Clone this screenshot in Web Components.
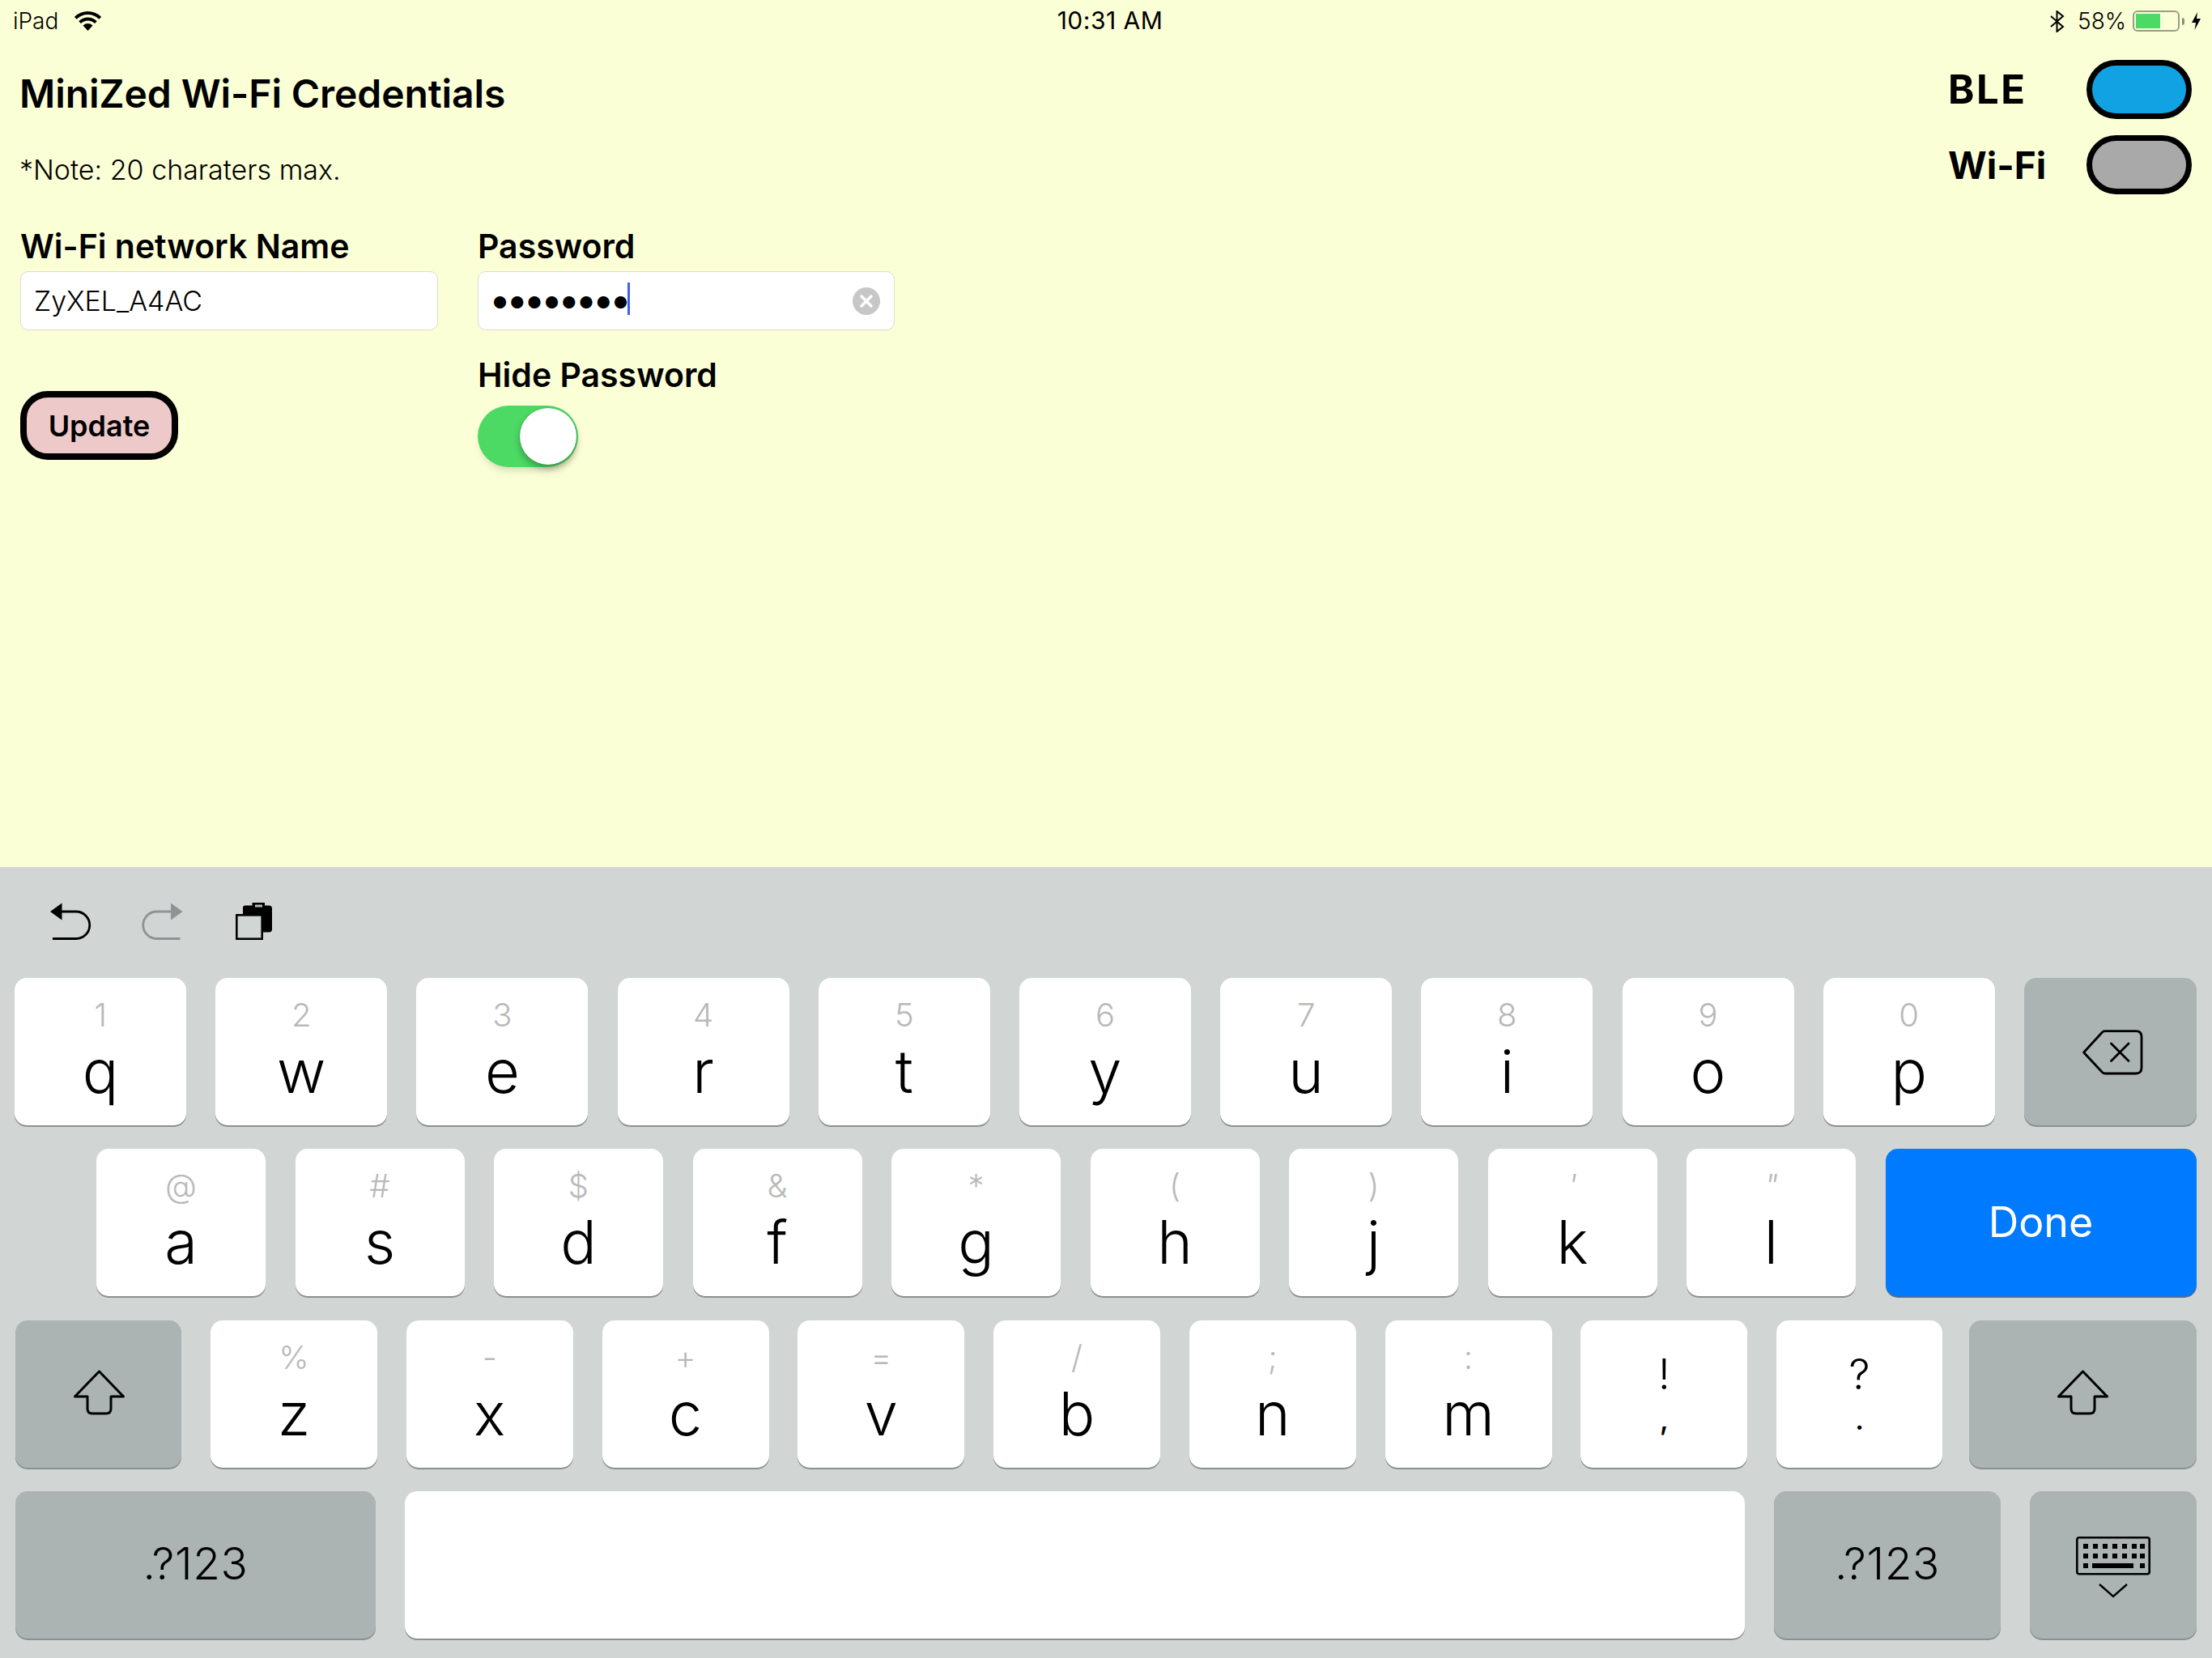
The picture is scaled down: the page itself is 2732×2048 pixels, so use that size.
<!DOCTYPE html>
<html lang="en">
<head>
<meta charset="utf-8">
<title>MiniZed Wi-Fi Credentials</title>
<style>
   html, body { margin: 0; height: 100%; }
   body { font-family: Inter, "Liberation Sans", sans-serif; color: #000; overflow: hidden; }
</style>
</head>
<body>

<ipad-app>
   <ipad-status slot="status"></ipad-status>

   <wifi-form slot="form">
      <form-title>MiniZed Wi-Fi Credentials</form-title>
      <form-note>*Note: 20 charaters max.</form-note>
      <form-columns>
         <form-stack>
            <form-label>Wi-Fi network Name</form-label>
            <text-field>ZyXEL_A4AC</text-field>
            <update-button>Update</update-button>
         </form-stack>
         <form-stack style="width: 515px">
            <form-label>Password</form-label>
            <text-field secure clear>••••••••</text-field>
            <form-label below>Hide Password</form-label>
            <ios-switch></ios-switch>
         </form-stack>
      </form-columns>
   </wifi-form>

   <link-state slot="state">
      <form-label big style="font-size: 49px; letter-spacing: 2.5px">BLE</form-label>
      <state-pill c="#10a2e2"></state-pill>
      <form-label big>Wi-Fi</form-label>
      <state-pill c="#a9a9a9"></state-pill>
   </link-state>

   <soft-keyboard slot="keyboard">
      <kb-tools slot="tools"></kb-tools>

      <kb-row pad="18" gap="36.2">
         <kb-key w="212" hint="1">q</kb-key>
         <kb-key w="212" hint="2">w</kb-key>
         <kb-key w="212" hint="3">e</kb-key>
         <kb-key w="212" hint="4">r</kb-key>
         <kb-key w="212" hint="5">t</kb-key>
         <kb-key w="212" hint="6">y</kb-key>
         <kb-key w="212" hint="7">u</kb-key>
         <kb-key w="212" hint="8">i</kb-key>
         <kb-key w="212" hint="9">o</kb-key>
         <kb-key w="212" hint="0">p</kb-key>
         <kb-key w="213" kind="mod">
            <svg width="75" height="56" viewBox="0 0 75 56" fill="none" stroke="#000" stroke-width="2.8" stroke-linejoin="round" stroke-linecap="round" style="margin: 2px 0 0 6px">
               <path d="M1.6 28 L24 3.5 Q25.5 1.6 28 1.6 H66 Q73 1.6 73 8.6 V47 Q73 54 66 54 H28 Q25.5 54 24 52 Z"/>
               <path d="M35.5 17 L57 38.5 M57 17 L35.5 38.5"/>
            </svg>
         </kb-key>
      </kb-row>

      <kb-row pad="119" gap="36.5">
         <kb-key w="209" hint="@">a</kb-key>
         <kb-key w="209" hint="#">s</kb-key>
         <kb-key w="209" hint="$">d</kb-key>
         <kb-key w="209" hint="&amp;">f</kb-key>
         <kb-key w="209" hint="*">g</kb-key>
         <kb-key w="209" hint="(">h</kb-key>
         <kb-key w="209" hint=")">j</kb-key>
         <kb-key w="209" hint="'" slant>k</kb-key>
         <kb-key w="209" hint="&quot;" slant>l</kb-key>
         <kb-key w="384" kind="done">Done</kb-key>
      </kb-row>

      <kb-row pad="19" gap="35.75">
         <kb-key w="205" kind="mod" style="margin-right: .25px">
            <shift-icon style="margin: -3px 0 0 2px"></shift-icon>
         </kb-key>
         <kb-key w="206" hint="%">z</kb-key>
         <kb-key w="206" hint="-">x</kb-key>
         <kb-key w="206" hint="+">c</kb-key>
         <kb-key w="206" hint="=">v</kb-key>
         <kb-key w="206" hint="/">b</kb-key>
         <kb-key w="206" hint=";">n</kb-key>
         <kb-key w="206" hint=":">m</kb-key>
         <kb-key w="206" kind="sym" hint="!">,</kb-key>
         <kb-key w="205" kind="sym" hint="?">.</kb-key>
         <kb-key w="281" kind="mod" ml="-2.75">
            <shift-icon style="margin-top: -3px"></shift-icon>
         </kb-key>
      </kb-row>

      <kb-row pad="19" gap="36">
         <kb-key w="445" kind="mod"><span style="margin-top: -3px">.?123</span></kb-key>
         <kb-key w="1655" kind="space"></kb-key>
         <kb-key w="280" kind="mod"><span style="margin-top: -3px">.?123</span></kb-key>
         <kb-key w="206" kind="mod">
            <svg width="92" height="76" viewBox="0 0 92 76" style="margin-top: 7px">
               <rect x="1.3" y="1.3" width="89.4" height="45" rx="2.5" fill="none" stroke="#000" stroke-width="2.6"/>
               <path fill="#000" d="M9 9h6v6H9zM21 9h6v6h-6zM33 9h6v6h-6zM45 9h6v6h-6zM57 9h6v6h-6zM69 9h6v6h-6zM79 9h6v6h-6z"/>
               <path fill="#000" d="M9 21h6v6H9zM21 21h6v6h-6zM33 21h6v6h-6zM45 21h6v6h-6zM57 21h6v6h-6zM69 21h6v6h-6zM79 21h6v6h-6z"/>
               <path fill="#000" d="M9 33h6v6H9zM20 33h51v6H20zM79 33h6v6h-6z"/>
               <path d="M29 59 L46 74 L63 59" fill="none" stroke="#000" stroke-width="2.4"/>
            </svg>
         </kb-key>
      </kb-row>
   </soft-keyboard>
</ipad-app>

<script>
const
   sheet = ( name, html ) => {
      customElements.define( name, class extends HTMLElement {
         constructor() {
            super();
            this.attachShadow( { mode: "open" } ).innerHTML = html;
         }
      } );
   }
;

/* == [ page frame ] == == == == == == == == == */
sheet( "ipad-app", `
   <style>
      :host { display: flex; flex-direction: column; width: 2732px; height: 2048px; background: #fbffd6; }
      main { flex: 1; display: flex; justify-content: space-between; padding: 0 25px; }
      ::slotted( [slot=keyboard] ) { flex: none; }
   </style>
   <slot name="status"></slot>
   <main>
      <slot name="form"></slot>
      <slot name="state"></slot>
   </main>
   <slot name="keyboard"></slot>
` );

/* == [ status bar ] == == == == == == == == == */
sheet( "ipad-status", `
   <style>
      :host { display: grid; grid-template-columns: 1fr auto 1fr; align-items: center; height: 52px; padding: 0 14px 0 16px; font-size: 28px; font-weight: 300; color: #000; }
      .l, .r { display: flex; align-items: center; }
      .l { gap: 20px; }
      .r { justify-content: flex-end; }
      .time { font-weight: 400; font-size: 30px; letter-spacing: .5px; padding: 0 0 2px 8px; }
      .bat { position: relative; width: 58px; height: 26px; box-sizing: border-box; border: 2px solid #9a9c8a; border-radius: 6px; margin: 0 3px 0 8px; }
      .bat i { display: block; width: 30px; height: 18px; margin: 2px; background: #4cd964; }
      .nub { width: 3px; height: 9px; background: #8a8c7a; border-radius: 0 3px 3px 0; margin-right: 9px; }
   </style>
   <div class="l">
      <span>iPad</span>
      <svg width="33" height="24" viewBox="0 0 33 24">
         <path fill="none" stroke="#000" stroke-width="4" d="M1.3 8.3 A21.5 21.5 0 0 1 31.7 8.3 M6.6 13.6 A14 14 0 0 1 26.4 13.6"/>
         <path d="M16.5 24 L10.5 17.5 A8.5 8.5 0 0 1 22.5 17.5 Z"/>
      </svg>
   </div>
   <div class="time">10:31 AM</div>
   <div class="r">
      <svg width="19" height="27" viewBox="0 0 19 27" fill="none" stroke="#000" stroke-width="2" style="margin-right: 16px">
         <path d="M2 7 L17 20 L9.5 26 V1 L17 7 L2 20"/>
      </svg>
      <span>58%</span>
      <div class="bat"><i></i></div>
      <div class="nub"></div>
      <svg width="11" height="22" viewBox="0 0 11 22"><path d="M7 0 L0 13 H5 L3.5 22 L11 8 H6 Z"/></svg>
   </div>
` );

/* == [ form ] == == == == == == == == == */
sheet( "wifi-form", `
   <style>
      :host { display: block; }
   </style>
   <slot></slot>
` );
sheet( "form-title", `
   <style>
      :host { display: block; margin: 34px 0 0 -1px; font-size: 48px; line-height: 60px; font-weight: 600; letter-spacing: -.1px; }
   </style>
   <slot></slot>
` );
sheet( "form-note", `
   <style>
      :host { display: block; margin: 42px 0 0 -1px; font-size: 34px; line-height: 44px; font-weight: 300; }
   </style>
   <slot></slot>
` );
sheet( "form-columns", `
   <style>
      :host { display: flex; gap: 49px; margin-top: 48px; }
   </style>
   <slot></slot>
` );
sheet( "form-stack", `
   <style>
      :host { display: block; width: 516px; }
   </style>
   <slot></slot>
` );
sheet( "form-label", `
   <style>
      :host { display: block; font-size: 41px; line-height: 48px; font-weight: 600; margin-bottom: 7px; }
      :host( [below] ) { margin-top: 31px; margin-bottom: 14px; }
      :host( [big] ) { font-size: 46px; font-weight: 700; margin: 0; }
   </style>
   <slot></slot>
` );

class TextField extends HTMLElement {
   constructor() {
      super();
      this.attachShadow( { mode: "open" } ).innerHTML = `
         <style>
            :host { display: flex; align-items: center; box-sizing: border-box; height: 73px; padding: 0 16px; background: #fff; border: 1.5px solid #dcdccb; border-radius: 10px; font-size: 34px; font-weight: 300; }
            :host( [secure] ) { font-size: 48px; font-weight: 400; padding: 0 18px 5px 13px; letter-spacing: -5.7px; }
            .caret { display: none; width: 3px; height: 40px; background: #3f5fef; margin-left: 1px; }
            :host( [secure] ) .caret { display: block; }
            svg { display: none; margin: 5px -1px 0 auto; }
            :host( [clear] ) svg { display: block; }
         </style>
         <slot></slot>
         <span class="caret"></span>
         <svg width="34" height="34" viewBox="0 0 34 34">
            <circle cx="17" cy="17" r="17" fill="#c7c7c7"/>
            <path d="M11 11 L23 23 M23 11 L11 23" stroke="#fff" stroke-width="3.4" stroke-linecap="round"/>
         </svg>
      `;
   }
}
customElements.define( "text-field", TextField );

sheet( "update-button", `
   <style>
      :host { display: inline-flex; align-items: center; justify-content: center; box-sizing: border-box; width: 195px; height: 85px; margin-top: 75px; background: #eec9c9; border: 8px solid #000; border-radius: 34px; font-size: 36px; font-weight: 600; }
   </style>
   <slot></slot>
` );
sheet( "ios-switch", `
   <style>
      :host { display: block; position: relative; width: 124px; height: 76px; border-radius: 38px; background: #4cd964; box-shadow: 0 8px 12px -6px rgba( 0, 0, 0, .2 ); }
      i { position: absolute; top: 3px; right: 2px; width: 70px; height: 70px; border-radius: 50%; background: #fff; box-shadow: 0 5px 8px rgba( 0, 0, 0, .28 ), 0 0 2px rgba( 0, 0, 0, .2 ); }
   </style>
   <i></i>
` );

/* == [ BLE / Wi-Fi state ] == == == == == == == == == */
sheet( "link-state", `
   <style>
      :host { display: grid; grid-template-columns: 171px 130px; grid-auto-rows: 73px; row-gap: 20px; align-items: center; align-self: flex-start; margin-top: 22px; }
   </style>
   <slot></slot>
` );
class StatePill extends HTMLElement {
   constructor() {
      super();
      this.attachShadow( { mode: "open" } ).innerHTML = `
         <style>
            :host { display: block; box-sizing: border-box; height: 73px; border: 7px solid #000; border-radius: 37px; }
         </style>
      `;
   }
   connectedCallback() {
      this.style.backgroundColor = this.getAttribute( "c" );
   }
}
customElements.define( "state-pill", StatePill );

/* == [ keyboard ] == == == == == == == == == */
sheet( "soft-keyboard", `
   <style>
      :host { display: block; height: 977px; box-sizing: border-box; background: #d1d5d4; }
      .rows { display: flex; flex-direction: column; gap: 29.33px; }
   </style>
   <slot name="tools"></slot>
   <div class="rows"><slot></slot></div>
` );
sheet( "kb-tools", `
   <style>
      :host { display: flex; align-items: flex-start; height: 137px; box-sizing: border-box; padding: 44px 0 0 62px; }
      .redo { margin-left: 61px; }
      .paste { margin-left: 65px; }
   </style>
   <svg width="51" height="46" viewBox="0 0 51 46" fill="none" stroke="#000" stroke-width="2.8">
      <path fill="#000" stroke="none" d="M0 11 L14.5 0.5 V21.5 Z"/>
      <path d="M13 11 H32 A16.6 16.6 0 0 1 32 44.5 H3"/>
   </svg>
   <svg class="redo" width="52" height="46" viewBox="0 0 51 46" fill="none" stroke="#8f9393" stroke-width="2.8">
      <path fill="#8f9393" stroke="none" d="M51 11 L36.5 0.5 V21.5 Z"/>
      <path d="M38 11 H19 A16.6 16.6 0 0 0 19 44.5 H48"/>
   </svg>
   <svg class="paste" width="45" height="46" viewBox="0 0 45 46">
      <path d="M9 6 Q9 3.5 12 3.5 H20.5 V0 H36 V3.5 H41 Q45 3.5 45 7 V33 Q45 36.5 41 36.5 H33 V14 H9 Z"/>
      <rect x="24" y="2.5" width="9" height="3" fill="#b5b9b9"/>
      <rect x="1.3" y="15.3" width="31.4" height="29.4" fill="none" stroke="#000" stroke-width="2.6"/>
   </svg>
` );
class KbRow extends HTMLElement {
   constructor() {
      super();
      this.attachShadow( { mode: "open" } ).innerHTML = `
         <style>
            :host { display: flex; height: 182px; }
         </style>
         <slot></slot>
      `;
   }
   connectedCallback() {
      this.style.paddingLeft = this.getAttribute( "pad" ) + "px";
      this.style.gap = this.getAttribute( "gap" ) + "px";
   }
}
customElements.define( "kb-row", KbRow );

class KbKey extends HTMLElement {
   constructor() {
      super();
      this.attachShadow( { mode: "open" } ).innerHTML = `
         <style>
            :host { display: block; flex: none; height: 182px; text-align: center; background: #fff; border-radius: 15px; box-shadow: 0 2px 0 #8b8f90; font-weight: 300; }
            .hint { display: block; height: 48px; margin-top: 22px; font-size: 40px; line-height: 48px; color: #b9b9b9; }
            .main { display: block; margin-top: 8px; font-size: 74px; line-height: 74px; }
            :host( [slant] ) .hint { font-style: italic; }

            :host( [kind=sym] ) .hint { height: 52px; margin-top: 41px; font-size: 52px; line-height: 52px; color: #000; }
            :host( [kind=sym] ) .main { margin-top: 10px; font-size: 37px; line-height: 37px; font-weight: 500; }

            :host( [kind=mod] ), :host( [kind=done] ) { display: flex; align-items: center; justify-content: center; }
            :host( [kind=mod] ) { background: #abb3b3; font-size: 55px; letter-spacing: .6px; }
            :host( [kind=done] ) { background: #007aff; color: #fff; font-size: 52px; font-weight: 400; box-shadow: 0 2px 0 #4a6f9c; }
            :host( [kind=mod] ) .hint, :host( [kind=done] ) .hint, :host( [kind=space] ) .hint { display: none; }
            :host( [kind=mod] ) .main, :host( [kind=done] ) .main { margin: 0; font-size: inherit; line-height: 1; display: flex; }
         </style>
         <span class="hint"></span>
         <span class="main"><slot></slot></span>
      `;
   }
   connectedCallback() {
      this.style.width = this.getAttribute( "w" ) + "px";
      if( this.hasAttribute( "ml" ) ) this.style.marginLeft = this.getAttribute( "ml" ) + "px";
      if( this.hasAttribute( "hint" ) ) this.shadowRoot.querySelector( ".hint" ).textContent = this.getAttribute( "hint" );
   }
}
customElements.define( "kb-key", KbKey );

sheet( "shift-icon", `
   <style>
      :host { display: block; width: 63px; height: 56px; }
   </style>
   <svg width="63" height="56" viewBox="0 0 63 56" fill="none" stroke="#000" stroke-width="3" stroke-linejoin="round">
      <path d="M31.5 2 L61.5 33 H46 V48 Q46 54 40 54 H23 Q17 54 17 48 V33 H1.5 Z"/>
   </svg>
` );
</script>
</body>
</html>
